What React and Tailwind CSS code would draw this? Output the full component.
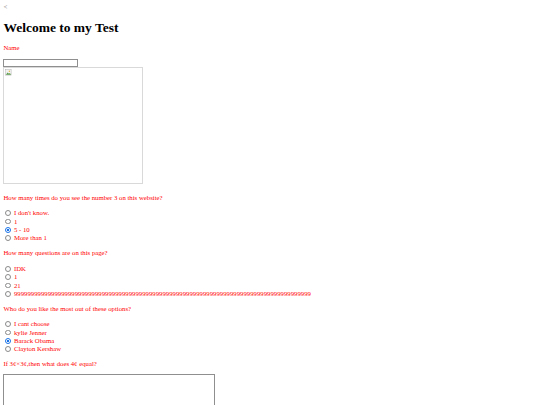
const serif = { fontFamily: '"Liberation Serif", "Times New Roman", serif' };

function Radio({ checked }) {
  return (
    <span
      className={
        "inline-block w-[5.8px] h-[5.8px] rounded-full border-[0.6px] ml-[2px] mr-[2.8px] shrink-0 " +
        (checked ? "border-[#1a73e8] bg-[radial-gradient(circle,#1a73e8_42%,#fff_52%)]" : "border-[#8a8a8a] bg-white")
      }
    />
  );
}

function Question({ title, options, selected }) {
  return (
    <div>
      <p className="text-[#f00] mt-[6.75px] mb-[7.4px] leading-[7.76px]">{title}</p>
      <div>
        {options.map((o, i) => (
          <div key={i} className="flex items-center h-[8.4px] text-[#f00] leading-[7.76px] whitespace-nowrap">
            <Radio checked={selected === i} />
            <span>{o}</span>
          </div>
        ))}
      </div>
    </div>
  );
}

export default function App() {
  return (
    <div className="w-[540px] h-[405px] overflow-hidden bg-white px-[3.4px] text-[6.75px]" style={serif}>
      <div className="pt-[3.4px] leading-[7.76px] text-[#888]">&lt;</div>
      <h1 className="text-[13.5px] font-bold leading-[15.5px] mt-[8.5px] mb-[9px] text-black">Welcome to my Test</h1>
      <p className="text-[#f00] leading-[7.76px]">Name</p>
      <input className="block mt-[6.75px] w-[75px] h-[8.2px] border-[0.8px] border-[#8f8f8f] bg-white" />
      <div className="w-[140px] h-[117px] border border-[#d9d9d9] pl-[1px] pt-[1px]">
        <svg width="7" height="7" viewBox="0 0 16 16">
          <rect x="1" y="1" width="13" height="13" fill="#f2f2f2" stroke="#aaa" />
          <path d="M2 13 L6 8 L9 11 L11 9 L14 13 Z" fill="#5a9a4a" />
          <circle cx="10" cy="5" r="1.6" fill="#e9b93e" />
        </svg>
      </div>
      <div className="h-[3.2px]" />
      <Question
        title="How many times do you see the number 3 on this website?"
        options={["I don't know.", "1", "5 - 10", "More than 1"]}
        selected={2}
      />
      <Question
        title="How many questions are on this page?"
        options={["IDK", "1", "21", "9".repeat(88)]}
        selected={-1}
      />
      <Question
        title="Who do you like the most out of these options?"
        options={["I cant choose", "kylie Jenner", "Barack Obama", "Clayton Kershaw"]}
        selected={2}
      />
      <p className="text-[#f00] mt-[6.75px] mb-[6px] leading-[7.76px]">If 3¢×3¢,then what does 4¢ equal?</p>
      <textarea className="block w-[212px] h-[40px] border-[0.8px] border-[#8f8f8f] resize-none" />
    </div>
  );
}
